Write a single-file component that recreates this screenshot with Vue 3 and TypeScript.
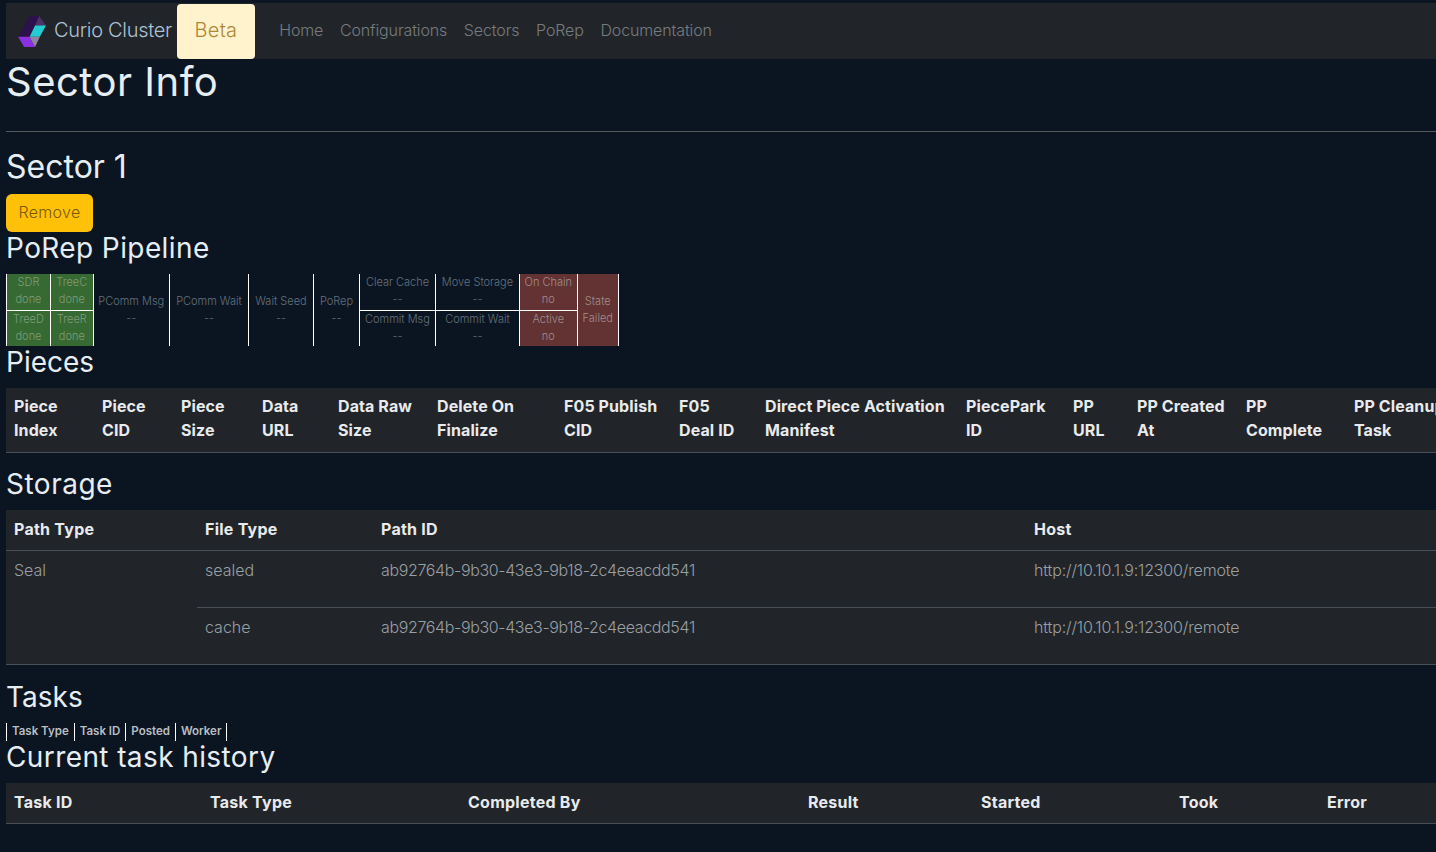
<script setup lang="ts">
const navLinks: string[] = ['Home', 'Configurations', 'Sectors', 'PoRep', 'Documentation']
const pieceCols: [string, number][] = [
  ['Piece Index', 88], ['Piece CID', 79], ['Piece Size', 81], ['Data URL', 76], ['Data Raw Size', 99],
  ['Delete On Finalize', 127], ['F05 Publish CID', 115], ['F05 Deal\u00a0ID', 86], ['Direct Piece Activation Manifest', 201],
  ['PiecePark ID', 107], ['PP URL', 64], ['PP Created At', 109], ['PP Complete', 108], ['PP Cleanup Task', 110],
]
const historyCols: [string, number][] = [
  ['Task ID', 196], ['Task Type', 258], ['Completed By', 340], ['Result', 173], ['Started', 198], ['Took', 148], ['Error', 117],
]
const taskCols: string[] = ['Task Type', 'Task ID', 'Posted', 'Worker']
</script>

<template>
  <div class="page">
    <nav class="nav">
      <svg class="logo" viewBox="28 17 82 91" width="28" height="31">
        <polygon points="61,17 90,17 62,78 28,78" fill="#2b124c" />
        <polygon points="90,17 110,45 78,45" fill="#4a3468" />
        <polygon points="78,45 110,45 92,78 62,78" fill="#22ccd2" />
        <polygon points="28,78 62,78 78,108 46,108" fill="#8a30e0" />
        <polygon points="62,78 92,78 78,108" fill="#90859e" />
      </svg>
      <span class="brand">Curio Cluster</span>
      <span class="beta">Beta</span>
      <a v-for="l in navLinks" :key="l" class="link">{{ l }}</a>
    </nav>

    <h1>Sector Info</h1>
    <hr />
    <h2>Sector 1</h2>
    <button class="remove">Remove</button>
    <h3 class="wide">PoRep Pipeline</h3>

    <table class="pipe">
      <tbody>
        <tr>
          <td class="ok w44">SDR<br />done</td>
          <td class="ok w43">TreeC<br />done</td>
          <td rowspan="2" class="w76b">PComm Msg<br />--</td>
          <td rowspan="2" class="w79">PComm Wait<br />--</td>
          <td rowspan="2" class="w65">Wait Seed<br />--</td>
          <td rowspan="2" class="w46">PoRep<br />--</td>
          <td class="w76">Clear Cache<br />--</td>
          <td class="w84">Move Storage<br />--</td>
          <td class="bad w58">On Chain<br />no</td>
          <td rowspan="2" class="bad w41">State<br />Failed</td>
        </tr>
        <tr>
          <td class="ok">TreeD<br />done</td>
          <td class="ok">TreeR<br />done</td>
          <td>Commit Msg<br />--</td>
          <td>Commit Wait<br />--</td>
          <td class="bad">Active<br />no</td>
        </tr>
      </tbody>
    </table>

    <h3>Pieces</h3>
    <table class="data pieces">
      <colgroup><col v-for="c in pieceCols" :key="c[0]" :style="{ width: c[1] + 'px' }" /></colgroup>
      <thead><tr><th v-for="c in pieceCols" :key="c[0]">{{ c[0] }}</th></tr></thead>
    </table>

    <h3 class="tight">Storage</h3>
    <table class="data storage">
      <colgroup>
        <col style="width: 191px" /><col style="width: 176px" /><col style="width: 653px" /><col style="width: 410px" />
      </colgroup>
      <thead><tr><th>Path Type</th><th>File Type</th><th>Path ID</th><th>Host</th></tr></thead>
      <tbody>
        <tr>
          <td rowspan="2">Seal</td>
          <td>sealed</td>
          <td class="uuid">ab92764b-9b30-43e3-9b18-2c4eeacdd541</td>
          <td class="host">http://10.10.1.9:12300/remote</td>
        </tr>
        <tr>
          <td>cache</td>
          <td class="uuid">ab92764b-9b30-43e3-9b18-2c4eeacdd541</td>
          <td class="host">http://10.10.1.9:12300/remote</td>
        </tr>
      </tbody>
    </table>

    <h3>Tasks</h3>
    <table class="tasks">
      <thead><tr><th v-for="t in taskCols" :key="t">{{ t }}</th></tr></thead>
    </table>
    <h3 class="wide">Current task history</h3>
    <table class="data history">
      <colgroup><col v-for="c in historyCols" :key="c[0]" :style="{ width: c[1] + 'px' }" /></colgroup>
      <thead><tr><th v-for="c in historyCols" :key="c[0]">{{ c[0] }}</th></tr></thead>
    </table>
  </div>
</template>

<style>
html, body { background: #0b1521; margin: 0; overflow: hidden; }
</style>

<style scoped>
.page {
  width: 1436px;
  height: 852px;
  box-sizing: border-box;
  padding: 3px 0 0 6px;
  overflow: hidden;
  background: #0b1521;
  color: #dee2e6;
  font-family: Inter, "Noto Sans", sans-serif;
  font-weight: 300;
  font-size: 16px;
  line-height: 24px;
}
.nav {
  display: flex;
  align-items: center;
  height: 56px;
  background: #212529;
  padding: 0 0 2px 12px;
  box-sizing: border-box;
  margin-right: -6px;
}
.logo { margin-right: 8px; margin-top: 2px; }
.brand { font-size: 20px; color: #adc2d4; margin-right: 5px; letter-spacing: -0.3px; }
.beta {
  display: flex;
  align-items: center;
  justify-content: center;
  width: 78px;
  height: 55px;
  margin-top: 2px;
  background: #fff3cd;
  border-radius: 4px;
  color: #b08636;
  font-size: 20px;
  letter-spacing: 0.3px;
  margin-right: 16px;
  padding-bottom: 2px;
  box-sizing: border-box;
}
.link { color: #777b7f; padding: 0 8.3px; font-size: 16px; letter-spacing: -0.12px; }
h1, h2, h3 { margin: 0; font-weight: 400; color: #e6edf3; }
h1 { font-size: 40px; line-height: 48px; letter-spacing: 0.5px; height: 48px; position: relative; top: -1px; }
hr { border: 0; border-top: 1px solid #53585d; margin: 24px 0 16px 0; width: 1430px; }
h2 { font-size: 32px; line-height: 38px; margin-bottom: 8px; }
h3 { font-size: 28px; line-height: 32px; padding-bottom: 2px; }
h3.tight { line-height: 31px; letter-spacing: 0.5px; }
h3.wide { letter-spacing: 0.4px; }
.remove {
  display: block;
  width: 87px;
  height: 38px;
  border: 0;
  border-radius: 6px;
  background: #ffc107;
  color: #7a5a00;
  font: inherit;
  letter-spacing: 0.3px;
  padding: 0 0 2px;
}
.pipe { border-collapse: collapse; margin-top: 8px; table-layout: fixed; width: 612px; font-size: 11px; line-height: 17px; color: #64717d; }
.pipe td { border-left: 1px solid #fff; border-right: 1px solid #fff; text-align: center; padding: 0 0 1px; height: 36px; white-space: nowrap; box-sizing: border-box; }
.pipe tr + tr td { border-top: 1px solid #fff; padding: 0; }
.pipe td[rowspan] { border-top: 0; padding: 0; }
.ok { background: #366a32; color: #7f9b7b; }
.bad { background: #633232; color: #a08e8c; }
.w44 { width: 44px; } .w43 { width: 42.6px; } .w76b { width: 76.4px; } .w76 { width: 76px; } .w79 { width: 79px; }
.w65 { width: 65px; } .w46 { width: 46px; } .w84 { width: 84px; } .w58 { width: 57.6px; } .w41 { width: 41.4px; }
.data { border-collapse: collapse; table-layout: fixed; background: #212529; margin-bottom: 16px; margin-top: 8px; }
.data th { text-align: left; font-weight: 700; color: #e8eaec; padding: 7px 8px 9px; border-bottom: 1px solid #495057; vertical-align: bottom; letter-spacing: 0.25px; }
.data td { text-align: left; vertical-align: top; color: #9a9fa4; padding: 7px 8px 25px; border-bottom: 1px solid #495057; }
.uuid { letter-spacing: -0.36px; }
.host { letter-spacing: -0.15px; }
.pieces { width: 1450px; }
.pieces th { padding: 6px 8px 10px; letter-spacing: 0.1px; }
.storage { width: 1430px; }
.history { width: 1430px; }
.tasks { border-collapse: collapse; margin-top: 8px; font-size: 11.5px; line-height: 16px; }
.tasks th { border-left: 1px solid #fff; border-right: 1px solid #fff; padding: 0 5px 2px; font-weight: 600; color: #b9bec3; }
</style>
